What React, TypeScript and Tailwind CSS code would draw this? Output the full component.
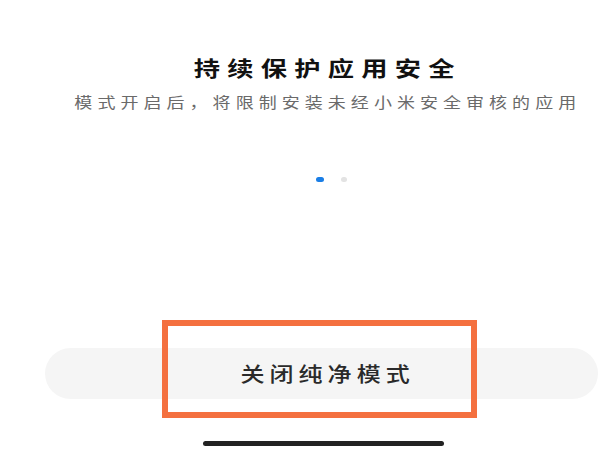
import React from "react";

const cjk = { fontFamily: '"Noto Sans CJK SC", "Noto Sans", sans-serif' };

export default function App() {
  return (
    <div className="w-[600px] h-[450px] bg-white overflow-hidden flex flex-col" style={cjk}>
      <div className="pt-[52px] pl-[48px] flex flex-col items-center">
        <div className="h-[30px] leading-[30px] text-[21px] font-bold text-[#111] tracking-[5.8px] pl-[5.8px] whitespace-nowrap scale-x-[1.25]">
          持续保护应用安全
        </div>
        <div className="mt-[10px] h-[20px] leading-[20px] text-[15px] text-[#6a6a6a] tracking-[4.2px] pl-[6px] whitespace-nowrap scale-x-[1.2]">
          模式开启后，将限制安装未经小米安全审核的应用
        </div>
        <div className="mt-[65px] flex items-center gap-[17px] pl-[14px]">
          <div className="w-[8px] h-[5px] rounded-full bg-[#1a7ee6]" />
          <div className="w-[6px] h-[5px] rounded-full bg-[#e3e3e3]" />
        </div>
      </div>
      <div className="relative mt-[166px] ml-[45px] w-[553px] h-[51px] rounded-full bg-[#f5f5f5] flex items-center justify-center">
        <span className="inline-block text-[20px] leading-[24px] text-[#2a2a2a] font-medium tracking-[4.2px] pl-[10px] whitespace-nowrap scale-x-[1.2]">
          关闭纯净模式
        </span>
        <div className="absolute left-[117px] top-[-28px] w-[315px] h-[98px] border-[6px] border-[#f4703f]" />
      </div>
      <div className="mt-[42px] ml-[203px] w-[241px] h-[5px] rounded-full bg-[#222]" />
    </div>
  );
}
